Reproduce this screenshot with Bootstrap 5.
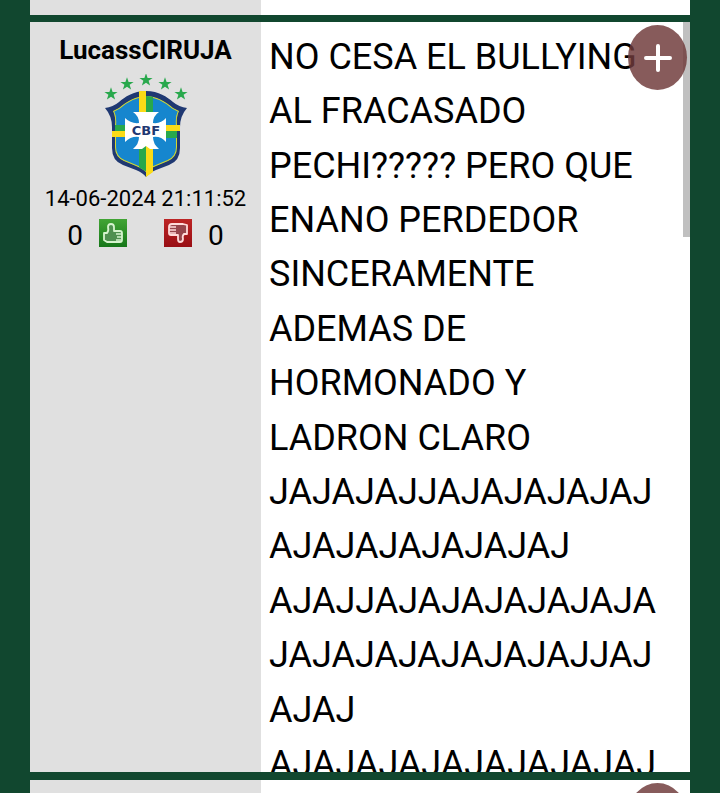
<!DOCTYPE html>
<html lang="es">
<head>
<meta charset="utf-8">
<meta name="viewport" content="width=device-width, initial-scale=1">
<title>Foro</title>
<link href="https://cdn.jsdelivr.net/npm/bootstrap@5.3.0/dist/css/bootstrap.min.css" rel="stylesheet">
<style>
body{background:#11472f;color:#000;font-family:Roboto,"Liberation Sans",sans-serif;overflow:hidden}
.thread{padding:0 30px;gap:7px;height:100vh;overflow:hidden}
.post{background:#fff}
.author{flex:0 0 35%;background:#e0e0e0}
.edge{height:15px}
.post-full{max-height:750px;margin-bottom:1px}
.author-name{font-size:26px;line-height:32px;font-weight:700;padding-top:12px;margin:0}
.crest{width:84px;height:106px}
.stamp{font-size:22px;line-height:30px;white-space:nowrap}
.votes{font-size:28px;line-height:32px}
.votes span{padding-top:6px}
.votes-gap{gap:37px}
.vote-btn{width:28px;height:28px;line-height:0}
.message{overflow:hidden;padding:8px 24px 0 8px;font-size:36px;line-height:54px;gap:1px}
.thumb{position:absolute;right:0;top:0;width:7px;height:215px;background:#c0c0c0}
.plus{position:absolute;right:3px;top:3px;width:59px;height:65px;border-radius:50%;background:rgba(111,58,58,.83)}
.plus:hover{background:#6f3a3a}
.last{flex:0 0 90px}
</style>
<script src="https://cdn.jsdelivr.net/npm/bootstrap@5.3.0/dist/js/bootstrap.bundle.min.js"></script>
</head>
<body>
<main class="thread d-flex flex-column">
  <div class="post edge d-flex flex-shrink-0"><div class="author"></div></div>
  <article class="post post-full d-flex flex-shrink-0 position-relative">
    <aside class="author d-flex flex-column align-items-center">
      <h2 class="author-name">LucassCIRUJA</h2>
      <svg class="crest mt-2" viewBox="0 0 84 106" role="img" aria-label="Escudo CBF">
        <defs>
          <path id="star" d="M0-6.8 1.6-2.1H6.6L2.6.8 4.1 5.6 0 2.7-4.1 5.6-2.6.8-6.6-2.1H-1.6Z"/>
          <clipPath id="inner"><path d="M42 22C32 22 23 27 15 34L9 37Q12 43 11 52V73Q11 83 20 87L32 92Q39 95 42 98Q45 95 52 92L64 87Q73 83 73 73V52Q72 43 75 37L69 34C61 27 52 22 42 22Z"/></clipPath>
        </defs>
        <g fill="#28a84c"><use href="#star" x="7" y="20"/><use href="#star" x="23" y="10"/><use href="#star" x="42" y="6"/><use href="#star" x="61" y="10"/><use href="#star" x="77" y="20"/></g>
        <path fill="#1f3872" d="M42 17C29 17 21 23 15 28Q9 33 1 34Q8 42 8 53V74Q8 87 19 91L32 96Q39 99 42 103Q45 99 52 96L65 91Q76 87 76 74V53Q76 42 83 34Q75 33 69 28C63 23 55 17 42 17Z"/>
        <g clip-path="url(#inner)">
          <path fill="#1686ce" stroke="#d7d72c" stroke-width="2" d="M42 22C32 22 23 27 15 34L9 37Q12 43 11 52V73Q11 83 20 87L32 92Q39 95 42 98Q45 95 52 92L64 87Q73 83 73 73V52Q72 43 75 37L69 34C61 27 52 22 42 22Z"/>
          <path fill="#28a84c" d="M42 22h7v24h-7zM35 70h7v27h-7zM9 51h17v6H9zM58 57h17v7H58z"/>
        </g>
        <path fill="#fadb17" d="M35 17h7v24h-7zM42 70h7v28l-7 5zM8 57h16v6H8zM60 51h16v6H60z"/>
        <path fill="#fff" d="M29 38H55Q49 42 49 49 57 50 62 44V68Q57 62 49 63 49 70 55 75H46L42 72 38 75H29Q35 70 35 63 27 62 21 68V44Q27 50 35 49 35 42 29 38Z"/>
        <text x="42" y="61" text-anchor="middle" fill="#1f3872" font-family="DejaVu Sans,sans-serif" font-size="13" font-weight="700">CBF</text>
      </svg>
      <time class="stamp mt-1">14-06-2024 21:11:52</time>
      <div class="votes d-flex align-items-center justify-content-center votes-gap">
        <div class="d-flex align-items-center gap-3"><span>0</span>
        <button class="vote-btn btn p-0 border-0 rounded-0" aria-label="Me gusta"><svg width="28" height="28" viewBox="0 0 28 28"><defs><linearGradient id="g" x2="0" y2="1"><stop stop-color="#42a535"/><stop offset="1" stop-color="#167719"/></linearGradient></defs><path fill="url(#g)" d="M0 0h28v28H0z"/><path fill="#4f9150" stroke="#d5f4cd" stroke-width="1.8" stroke-linejoin="round" d="M5 14H8Q10 12 9 8 9 5 12 5 15 5 15 8V12H21Q23 12 23 14V21Q23 23 21 23H8L5 21Z"/><path fill="none" stroke="#d5f4cd" stroke-width="1.4" d="M17 15h6M18 18h5M17 21h5"/></svg></button></div>
        <div class="d-flex align-items-center gap-3"><button class="vote-btn btn p-0 border-0 rounded-0" aria-label="No me gusta"><svg width="28" height="28" viewBox="0 0 28 28"><defs><linearGradient id="r" x2="0" y2="1"><stop stop-color="#bd2525"/><stop offset="1" stop-color="#980e14"/></linearGradient></defs><path fill="url(#r)" d="M0 0h28v28H0z"/><path fill="#96454c" stroke="#ffdada" stroke-width="1.8" stroke-linejoin="round" d="M23 6V15H20Q18 17 19 20 19 23 16 23 14 23 14 20V16H7Q5 16 5 14V8Q5 5 8 5H19Z"/><path fill="none" stroke="#ffdada" stroke-width="1.4" d="M5 8h7M5 11h7M6 14h6"/></svg></button>
        <span>0</span></div>
      </div>
    </aside>
    <div class="message d-flex flex-column flex-fill">
      <div>NO CESA EL BULLYING<br>AL FRACASADO</div>
      <div>PECHI????? PERO QUE<br>ENANO PERDEDOR<br>SINCERAMENTE</div>
      <div>ADEMAS DE<br>HORMONADO Y</div>
      <div>LADRON CLARO<br>JAJAJAJJAJAJAJAJAJ<br>AJAJAJAJAJAJAJ</div>
      <div>AJAJJAJAJAJAJAJAJA<br>JAJAJAJAJAJAJAJJAJ</div>
      <div>AJAJ<br>AJAJAJAJAJAJAJAJAJ</div>
    </div>
    <div class="thumb"></div>
    <button class="plus btn p-0 border-0" aria-label="Agregar"><svg width="28" height="28" viewBox="0 0 28 28"><path d="M14 2v24M2 14h24" stroke="#fff" stroke-width="4" stroke-linecap="round"/></svg></button>
  </article>
  <article class="post last d-flex position-relative"><div class="author"></div>
    <button class="plus btn p-0 border-0" aria-label="Agregar"></button>
  </article>
</main>
</body>
</html>
